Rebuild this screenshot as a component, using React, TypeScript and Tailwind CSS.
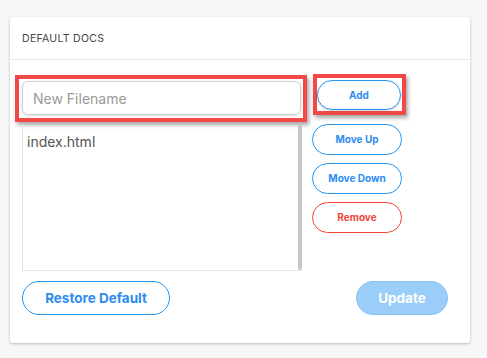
export default function App() {
  return (
    <div className="min-h-[358px] w-full bg-[#f7f7f7] pt-[17px] pl-[10px] font-['Inter',_'Liberation_Sans',_sans-serif]">
      <div className="w-[460px] h-[326px] bg-white rounded-[2px] shadow-[0_1px_3px_rgba(0,0,0,0.25)]">
        <div className="h-[43px] flex items-center pt-[2px] px-[12px] border-b border-[#e8e8e8] text-[10.5px] text-[#444] tracking-[0.3px]">
          DEFAULT DOCS
        </div>

        <div className="flex pt-[14px] pl-[5px]">
          <div className="w-[292px] mt-[1px]">
            <div className="border-4 border-[#f24848] pl-[3px] pr-[2px] pt-[2px] pb-[3px] shadow-[2px_3px_4px_rgba(0,0,0,0.35)]">
              <input
                className="w-full h-[34px] rounded-[6px] border border-[#cfcfcf] px-[10px] text-[14px] text-[#444] placeholder-[#9a9a9a] outline-none shadow-[0_1px_3px_rgba(0,0,0,0.15)]"
                placeholder="New Filename"
              />
            </div>
            <div className="ml-[7px] mt-[2px] w-[280px] h-[147px] flex border-l border-b border-[#e4e4e4]">
              <div className="flex-1 pl-[4px] pt-[8px] text-[14px] leading-[20px] text-[#555]">index.html</div>
              <div className="w-[4px] bg-[#c6c6c6] rounded-[2px]" />
            </div>
          </div>

          <div className="ml-[5px] flex flex-col">
            <div className="ml-[1px] w-[93px] h-[41px] border-4 border-[#f24848] shadow-[2px_3px_4px_rgba(0,0,0,0.35)] pt-[2px]">
              <button className="w-[84px] h-[30px] rounded-full border border-[#2196f3] text-[10px] font-bold text-[#2d8cf0] shadow-[0_1px_2px_rgba(0,0,0,0.2)]">
                Add
              </button>
            </div>
            <button className="mt-[9px] w-[90px] h-[31px] rounded-full border border-[#2196f3] text-[10px] font-bold text-[#2d8cf0]">
              Move Up
            </button>
            <button className="mt-[8px] w-[90px] h-[31px] rounded-full border border-[#2196f3] text-[10px] font-bold text-[#2d8cf0]">
              Move Down
            </button>
            <button className="mt-[8px] w-[90px] h-[31px] rounded-full border border-[#f44336] text-[10px] font-bold text-[#f0443a]">
              Remove
            </button>
          </div>
        </div>

        <div className="flex justify-between pl-[12px] pr-[22px] mt-[10px]">
          <button className="w-[148px] h-[34px] rounded-full border border-[#2196f3] text-[13.5px] font-bold text-[#2d8cf0]">
            Restore Default
          </button>
          <button className="w-[92px] h-[34px] rounded-full bg-[#9acdf8] border border-[#8cc4f4] text-[13.5px] font-bold text-white">
            Update
          </button>
        </div>
      </div>
    </div>
  );
}
